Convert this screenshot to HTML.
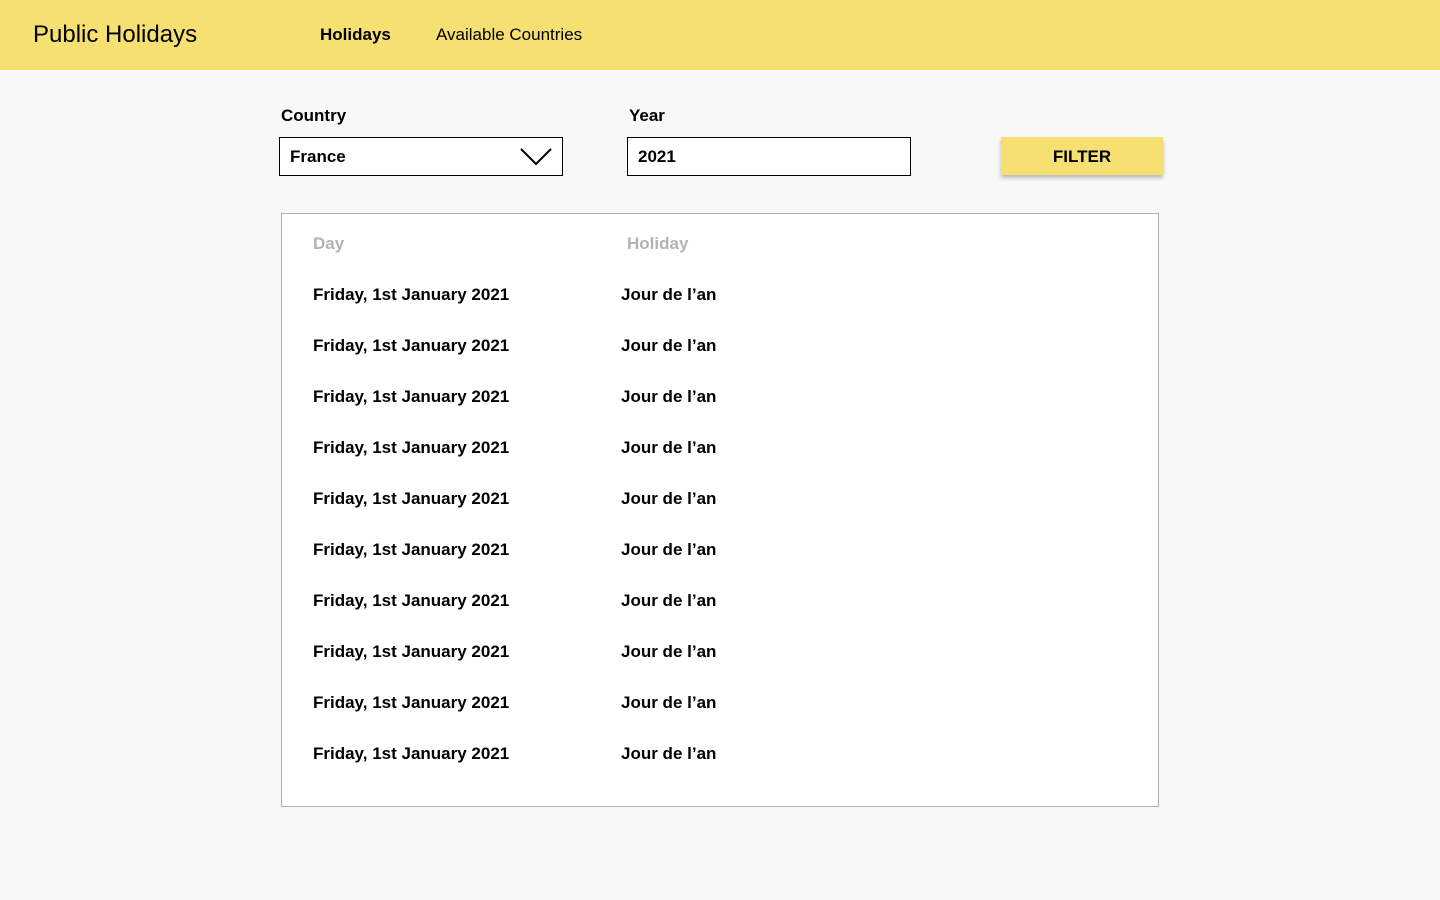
<!DOCTYPE html>
<html><head><style>
*{margin:0;padding:0;box-sizing:border-box}
body{width:1440px;height:900px;background:#f8f8f8;font-family:"Liberation Sans",sans-serif;position:relative;overflow:hidden;color:#000}
.hdr{position:absolute;left:0;top:0;width:1440px;height:70px;background:#f6e072}
.abs{position:absolute;white-space:nowrap}
.lbl{font-weight:bold;font-size:17px}
.box{position:absolute;border:1px solid #000;background:#fff;height:39px}
.row{font-weight:bold;font-size:17px}
</style></head><body>
<div class="hdr"></div>
<div class="abs" style="left:33px;top:21px;font-size:24px">Public Holidays</div>
<div class="abs" style="left:320px;top:25px;font-size:17px;font-weight:bold">Holidays</div>
<div class="abs" style="left:436px;top:25px;font-size:17px">Available Countries</div>
<div class="abs lbl" style="left:281px;top:106px">Country</div>
<div class="abs lbl" style="left:629px;top:106px">Year</div>
<div class="box" style="left:279px;top:137px;width:284px"></div>
<div class="abs lbl" style="left:290px;top:147px">France</div>
<svg class="abs" style="left:520px;top:148px" width="32" height="18"><path d="M1 1 L16 16 L31 1" fill="none" stroke="#000" stroke-width="2"/></svg>
<div class="box" style="left:627px;top:137px;width:284px"></div>
<div class="abs lbl" style="left:638px;top:147px">2021</div>
<div class="abs" style="left:1001px;top:137px;width:162px;height:38px;background:#f6e072;box-shadow:0 3px 4px rgba(0,0,0,.25);text-align:center;line-height:40px;font-weight:bold;font-size:17px">FILTER</div>
<div class="abs" style="left:281px;top:213px;width:878px;height:594px;border:1px solid #b0b0b0;background:#fff"></div>
<div class="abs lbl" style="left:313px;top:234px;color:#b3b3b3">Day</div>
<div class="abs lbl" style="left:627px;top:234px;color:#b3b3b3">Holiday</div>
<div class="abs row" style="left:313px;top:285px">Friday, 1st January 2021</div><div class="abs row" style="left:621px;top:285px">Jour de l’an</div>
<div class="abs row" style="left:313px;top:336px">Friday, 1st January 2021</div><div class="abs row" style="left:621px;top:336px">Jour de l’an</div>
<div class="abs row" style="left:313px;top:387px">Friday, 1st January 2021</div><div class="abs row" style="left:621px;top:387px">Jour de l’an</div>
<div class="abs row" style="left:313px;top:438px">Friday, 1st January 2021</div><div class="abs row" style="left:621px;top:438px">Jour de l’an</div>
<div class="abs row" style="left:313px;top:489px">Friday, 1st January 2021</div><div class="abs row" style="left:621px;top:489px">Jour de l’an</div>
<div class="abs row" style="left:313px;top:540px">Friday, 1st January 2021</div><div class="abs row" style="left:621px;top:540px">Jour de l’an</div>
<div class="abs row" style="left:313px;top:591px">Friday, 1st January 2021</div><div class="abs row" style="left:621px;top:591px">Jour de l’an</div>
<div class="abs row" style="left:313px;top:642px">Friday, 1st January 2021</div><div class="abs row" style="left:621px;top:642px">Jour de l’an</div>
<div class="abs row" style="left:313px;top:693px">Friday, 1st January 2021</div><div class="abs row" style="left:621px;top:693px">Jour de l’an</div>
<div class="abs row" style="left:313px;top:744px">Friday, 1st January 2021</div><div class="abs row" style="left:621px;top:744px">Jour de l’an</div>
</body></html>
